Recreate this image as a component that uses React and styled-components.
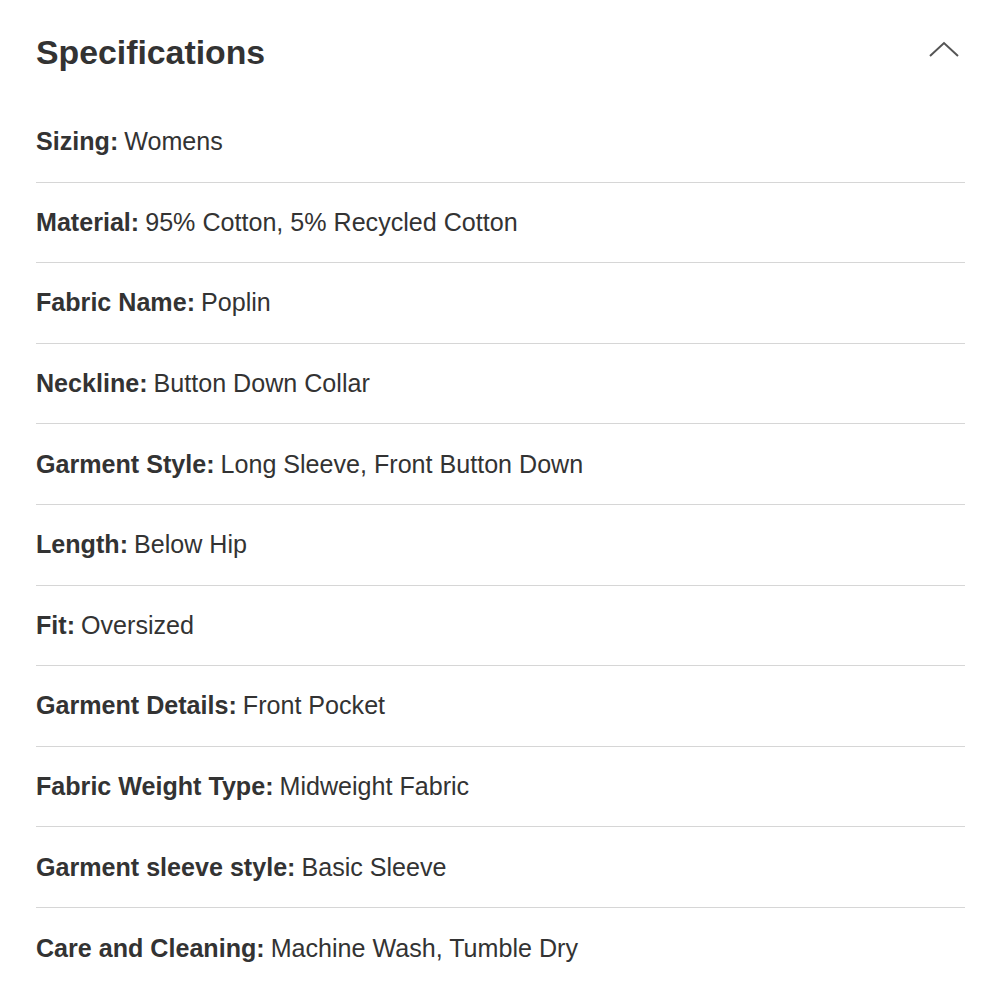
import React from 'react';
import styled, { createGlobalStyle } from 'styled-components';

const GlobalStyle = createGlobalStyle`
  body {
    margin: 0;
    background: #fff;
    font-family: "Liberation Sans", Arial, sans-serif;
    color: #333;
  }
`;

const Wrapper = styled.section`
  padding: 0 35px 0 36px;
`;

const Header = styled.div`
  height: 102px;
  display: flex;
  align-items: flex-start;
  justify-content: space-between;
`;

const Title = styled.h2`
  margin: 33px 0 0;
  font-size: 33.8px;
  font-weight: bold;
  line-height: 38px;
  color: #333;
`;

const Toggle = styled.button`
  margin: 40px 5px 0 0;
  padding: 0;
  border: 0;
  background: none;
  width: 32px;
  height: 20px;
  color: #555;
`;

const List = styled.ul`
  margin: 0;
  padding: 0;
  list-style: none;
`;

const Row = styled.li`
  height: 80.6px;
  display: flex;
  align-items: center;
  box-sizing: border-box;
  border-bottom: ${(p) => (p.last ? 'none' : '1px solid #d6d6d6')};
  font-size: 25.1px;
  color: #333;
`;

const Label = styled.b`
  font-weight: bold;
  margin-right: 6px;
`;

const specs = [
  ['Sizing', 'Womens'],
  ['Material', '95% Cotton, 5% Recycled Cotton'],
  ['Fabric Name', 'Poplin'],
  ['Neckline', 'Button Down Collar'],
  ['Garment Style', 'Long Sleeve, Front Button Down'],
  ['Length', 'Below Hip'],
  ['Fit', 'Oversized'],
  ['Garment Details', 'Front Pocket'],
  ['Fabric Weight Type', 'Midweight Fabric'],
  ['Garment sleeve style', 'Basic Sleeve'],
  ['Care and Cleaning', 'Machine Wash, Tumble Dry'],
];

const App = () => {
  return (
    <Wrapper>
      <GlobalStyle />
      <Header>
        <Title>Specifications</Title>
        <Toggle aria-label="Collapse">
          <svg width="32" height="20" viewBox="0 0 32 20" fill="none">
            <path d="M2 16 L16 3 L30 16" stroke="currentColor" strokeWidth="2" />
          </svg>
        </Toggle>
      </Header>
      <List>
        {specs.map(([label, value], i) => (
          <Row key={label} last={i === specs.length - 1}>
            <Label>{label}:</Label>
            {value}
          </Row>
        ))}
      </List>
    </Wrapper>
  );
};

export default App;
